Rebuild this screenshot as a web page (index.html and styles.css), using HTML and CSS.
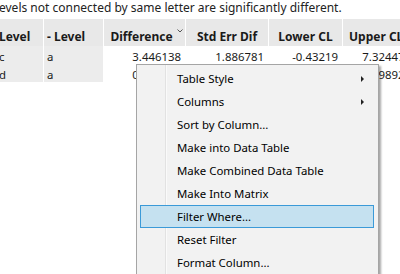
FILE: index.html
```html
<!DOCTYPE html>
<html>
<head>
    <title>Connecting Letters Report</title>
    <link rel="stylesheet" href="styles.css">
</head>
<body>
    <div class="caption">evels not connected by same letter are significantly different.</div>
    <div class="report">
        <div class="row head">
            <div class="cell lvl first">Level</div>
            <div class="cell lvl">- Level</div>
            <div class="cell num-head sorted">Difference
                <svg class="chev" width="6" height="4" viewBox="0 0 6 4"><polyline points="0.5,0.5 3,3 5.5,0.5" fill="none" stroke="#555" stroke-width="1"/></svg>
            </div>
            <div class="cell num-head">Std Err Dif</div>
            <div class="cell num-head">Lower CL</div>
            <div class="cell num-head upper">Upper CL</div>
        </div>
        <div class="row">
            <div class="cell lvl first grey">c</div>
            <div class="cell lvl grey">a</div>
            <div class="cell num">3.446138</div>
            <div class="cell num">1.886781</div>
            <div class="cell num">-0.43219</div>
            <div class="cell num">7.324471</div>
        </div>
        <div class="row">
            <div class="cell lvl first grey">d</div>
            <div class="cell lvl grey">a</div>
            <div class="cell num">0.941570</div>
            <div class="cell num">1.886781</div>
            <div class="cell num">-2.93676</div>
            <div class="cell num">4.798923</div>
        </div>
    </div>

    <div class="menu">
        <ul>
            <li class="sub">Table Style</li>
            <li class="sub">Columns</li>
            <li>Sort by Column...</li>
            <li>Make into Data Table</li>
            <li>Make Combined Data Table</li>
            <li>Make Into Matrix</li>
            <li class="active">Filter Where...</li>
            <li>Reset Filter</li>
            <li>Format Column...</li>
        </ul>
    </div>
</body>
</html>
```

FILE: styles.css
```css
body {
    margin: 0;
    background-color: white;
    font-family: "Noto Sans", "Open Sans", sans-serif;
    font-size: 11.4px;
    color: #1a1a1a;
    overflow: hidden;
}
.caption {
    height: 19px;
    line-height: 15px;
    margin-left: -1px;
    font-size: 12px;
    color: #222;
    white-space: nowrap;
}
.report {
    width: 400px;
    overflow: hidden;
}
.row {
    display: grid;
    grid-template-columns: 43px 59px 81px 82px 73px 72px;
    column-gap: 1px;
    height: 18px;
}
.row.head {
    height: 27px;
}
.cell {
    white-space: nowrap;
    overflow: hidden;
    line-height: 18px;
    padding-top: 2px;
}
.head .cell {
    background-color: #e8e8e8;
    font-weight: bold;
    font-size: 12px;
    line-height: 16px;
    padding-top: 10px;
}
.head .upper {
    text-align: left;
    padding-left: 6px;
}
.lvl {
    padding-left: 3px;
}
.first {
    margin-left: -1px;
    padding-left: 0;
}
.grey {
    background-color: #ececec;
}
.num-head {
    text-align: center;
}
.sorted {
    position: relative;
    padding-right: 6px;
}
.chev {
    position: absolute;
    right: 2px;
    top: 10px;
}
.num {
    text-align: right;
    padding-right: 4px;
}
.menu {
    position: absolute;
    left: 136px;
    top: 64px;
    width: 241px;
    height: 230px;
    background-color: #f2f2f2;
    border: 1px solid #a5a5a5;
    box-shadow: 2px 2px 2px rgba(0, 0, 0, 0.35);
}
.menu::before {
    content: "";
    position: absolute;
    left: 28px;
    top: 0;
    bottom: 0;
    width: 1px;
    background-color: #e2e2e2;
    border-right: 1px solid #fafafa;
}
.menu ul {
    list-style: none;
    margin: 0;
    padding: 2px 0 0 0;
}
.menu li {
    position: relative;
    height: 21px;
    line-height: 21px;
    margin: 0 4px 0 3px;
    padding-left: 36px;
    border: 1px solid transparent;
    color: black;
}
.menu li.sub::after {
    content: "";
    position: absolute;
    right: 9px;
    top: 8px;
    border-left: 3px solid #222;
    border-top: 3px solid transparent;
    border-bottom: 3px solid transparent;
}
.menu li.active {
    background-color: #c5e1f0;
    border-color: #3b9ad8;
}
```
